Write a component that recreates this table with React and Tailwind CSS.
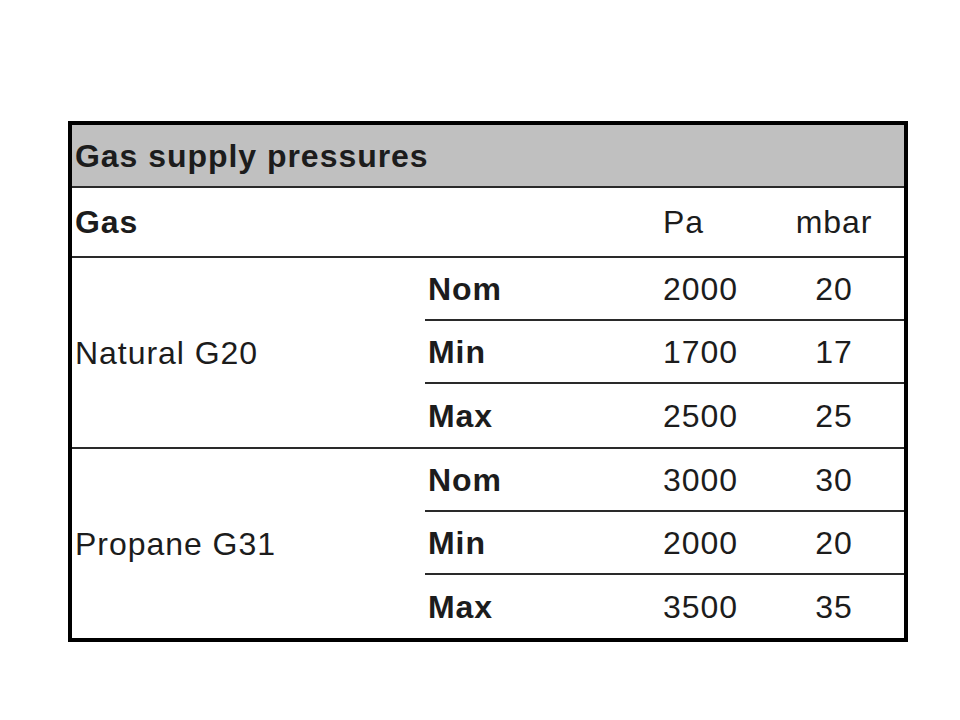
const groups = [
  {
    name: "Natural G20",
    rows: [
      { label: "Nom", pa: "2000", mbar: "20" },
      { label: "Min", pa: "1700", mbar: "17" },
      { label: "Max", pa: "2500", mbar: "25" },
    ],
  },
  {
    name: "Propane G31",
    rows: [
      { label: "Nom", pa: "3000", mbar: "30" },
      { label: "Min", pa: "2000", mbar: "20" },
      { label: "Max", pa: "3500", mbar: "35" },
    ],
  },
];

export default function App() {
  return (
    <div
      className="min-h-[720px] w-[960px] bg-white pt-[121px] pl-[68px] text-[#1c1c1c] text-[32px] tracking-[0.03em] leading-none"
      style={{ fontFamily: '"Liberation Sans", Arial, sans-serif' }}
    >
      <div className="w-[840px] border-[4px] border-black">
        {/* title */}
        <div className="h-[63px] bg-[#c0c0c0] border-b-2 border-[#2a2a2a] flex items-center pl-[3px] font-bold">
          Gas supply pressures
        </div>

        {/* units row */}
        <div className="h-[70px] border-b-2 border-[#2a2a2a] flex items-center">
          <div className="w-[353px] pl-[3px] font-bold">Gas</div>
          <div className="w-[235px]" />
          <div className="w-[104px] pl-[3px]">Pa</div>
          <div className="w-[140px] text-center">mbar</div>
        </div>

        {groups.map((g, gi) => (
          <div
            key={g.name}
            className={
              "flex " + (gi < groups.length - 1 ? "border-b-2 border-[#2a2a2a]" : "")
            }
          >
            <div className="w-[353px] pl-[3px] flex items-center">{g.name}</div>
            <div className="flex-1 flex flex-col">
              {g.rows.map((r, ri) => (
                <div
                  key={r.label}
                  className={
                    "h-[63px] flex items-center " +
                    (ri < g.rows.length - 1 ? "border-b-2 border-[#2a2a2a]" : "")
                  }
                >
                  <div className="w-[235px] pl-[3px] font-bold">{r.label}</div>
                  <div className="w-[104px] pl-[3px]">{r.pa}</div>
                  <div className="w-[140px] text-center">{r.mbar}</div>
                </div>
              ))}
            </div>
          </div>
        ))}
      </div>
    </div>
  );
}
